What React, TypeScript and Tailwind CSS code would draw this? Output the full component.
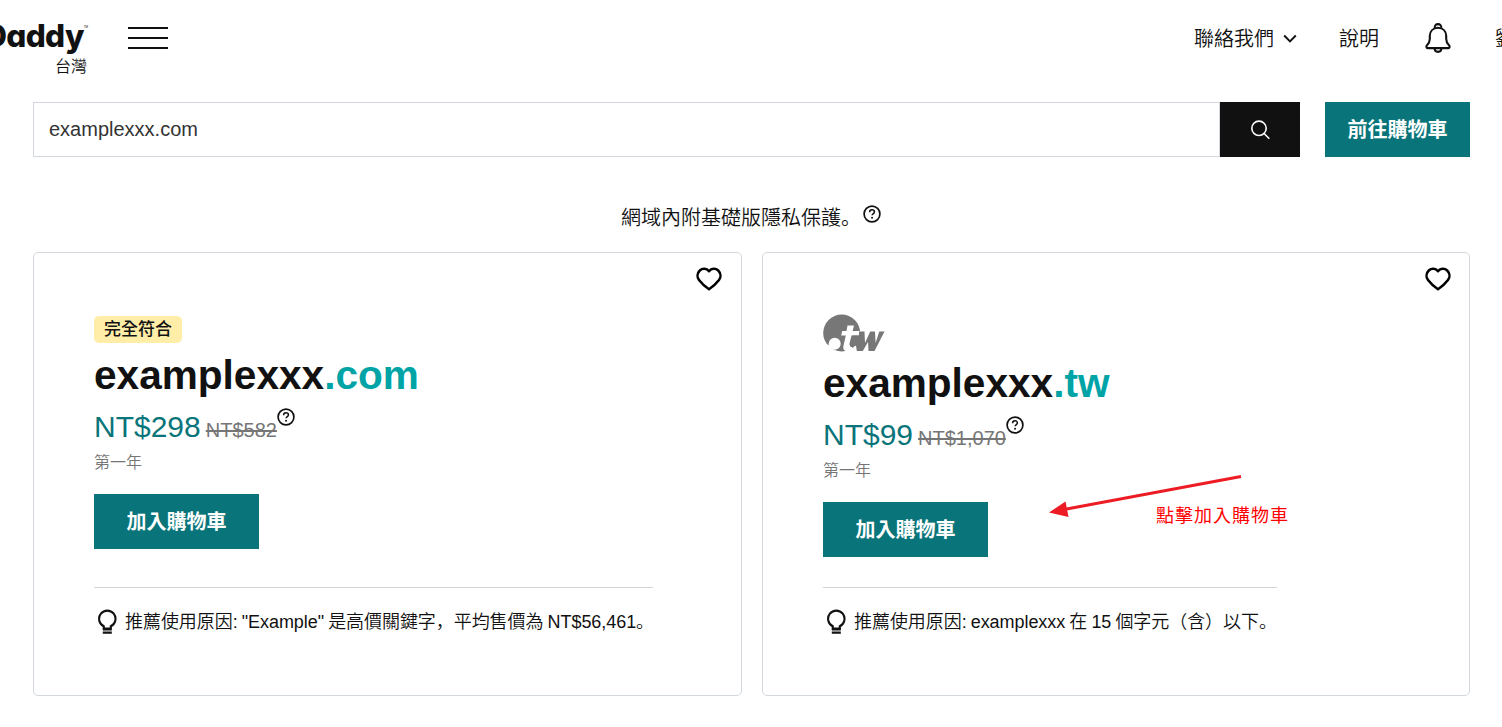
import React from "react";

const QuestionIcon = ({ className = "" }: { className?: string }) => (
  <svg className={className} width="18" height="18" viewBox="0 0 18 18" fill="none" stroke="#111" strokeWidth="1.7">
    <circle cx="9" cy="9" r="7.9" />
    <path d="M6.600 7.200c0-1.500 1-2.400 2.400-2.400s2.400.9 2.400 2.100c0 1.600-2.300 1.700-2.300 3.400" strokeWidth="1.5" />
    <circle cx="9.05" cy="12.7" r="1" fill="#111" stroke="none" />
  </svg>
);

const HeartIcon = () => (
  <svg width="26" height="24" viewBox="0 0 26 24" fill="none" stroke="#000" strokeWidth="2.5" strokeLinejoin="round">
    <path d="M13 4.200C10.600 1.200 6.300 1.100 3.800 3.500 1 6.200 .9 10.300 3 13.100 5.500 16.500 10 20.200 13 22.200 16 20.200 20.500 16.500 23 13.100 25.100 10.300 25 6.200 22.200 3.500 19.700 1.100 15.400 1.200 13 4.200Z" />
  </svg>
);

const BulbIcon = () => (
  <svg width="20" height="26" viewBox="0 0 20 26" fill="none" stroke="#111" strokeWidth="2.1">
    <path d="M6.800 17.200A8.200 8.200 0 1 1 13.800 17.200V19.500H6.800Z" />
    <path d="M5.800 20.300h9M5.800 23.700h9" strokeWidth="2.300" />
  </svg>
);

const BellIcon = () => (
  <svg width="26" height="32" viewBox="0 0 26 32" fill="none" stroke="#111" strokeWidth="2.1" strokeLinejoin="round">
    <path d="M13 4.800C8 4.800 5 8.300 4.800 12.800v3.300c0 3.300-1.200 4.600-2.800 6.200-1 1-.9 2.800.8 2.800h20.400c1.700 0 1.800-1.800.8-2.800-1.600-1.600-2.800-2.900-2.800-6.200v-3.300C21 8.300 18 4.800 13 4.800Z" />
    <path d="M9.800 4.900C9.400 2.500 11 1.100 13 1.100s3.600 1.400 3.200 3.800M9.600 25.300c0 2.200 1.400 3.600 3.400 3.600s3.400-1.400 3.400-3.600" />
  </svg>
);

const TwLogo = () => (
  <svg width="62" height="38" viewBox="0 0 62 38">
    <circle cx="18.700" cy="19" r="18.500" fill="#777" />
    <circle cx="11.700" cy="29.800" r="6" fill="#fff" />
    <path d="M4.500 30 12 37.500H5Z" fill="#fff" />
    <path d="M24.500 11.500H31L29.600 17H38v4.500h-9.500l-2 8c-.4 1.900.8 2.600 3.100 2.200l-1 4.800c-5 1.500-9.200.3-8.200-4.600l2.400-10.400h-4.600l1-4.500h4.300Z" fill="#fff" />
    <path d="M29.600 21.500H36V17.500h5.500L42 29l5.200-11.500h4.800L52.600 29l3.700-11.500H61.500L51.500 37h-6L45 28l-5.200 9h-6L33 31.500l-3.200 1.500c-2.200.4-3.100-.6-2.700-2.300Z" fill="#777" />
  </svg>
);

type CardProps = {
  mark: React.ReactNode;
  tld: string;
  price: string;
  oldPrice: string;
  reason: React.ReactNode;
  titleGap: string;
  rule: string;
};

const Punct = ({ children }: { children: string }) => (
  <span lang="zh-CN" className="font-['Noto_Sans_CJK_SC',sans-serif]">{children}</span>
);

function DomainCard({ mark, tld, price, oldPrice, reason, titleGap, rule }: CardProps) {
  return (
    <article className="relative h-[444px] rounded-[5px] border border-[#d3d8de] pl-[60px]">
      <button className="absolute left-[662px] top-[14px]" aria-label="收藏"><HeartIcon /></button>
      {mark}
      <h2 className={`text-[40.6px] leading-[48px] font-bold text-[#111] ${titleGap}`}>
        examplexxx<span className="text-[#00a4a6]">{tld}</span>
      </h2>
      <div className="mt-[10px] flex h-[37px] items-start">
        <span className="text-[30px] leading-9 text-[#09757a]">{price}</span>
        <span className="ml-[5px] mt-[7px] text-[20px] leading-7 text-[#767676] line-through decoration-2">{oldPrice}</span>
        <QuestionIcon className="ml-[0.5px] -mt-[1.500px]" />
      </div>
      <p className="mt-[5px] text-[16px] leading-6 font-[350] text-[#767676]">第一年</p>
      <button className="mt-[19px] flex h-[55px] w-[165px] items-center justify-center bg-[#09757a] text-[20px] font-bold text-white">加入購物車</button>
      <div className={`border-t border-[#d4d4d4] ${rule}`}>
        <div className="flex items-center pt-5">
          <span className="ml-[3px] mr-[8px]"><BulbIcon /></span>
          <span className="pb-[2px] text-[18px] leading-6 font-[350] tracking-[-0.06px] [word-spacing:-0.8px] whitespace-nowrap text-[#111]">{reason}</span>
        </div>
      </div>
    </article>
  );
}

export default function App() {
  return (
    <div className="h-[727px] w-[1502px] overflow-hidden bg-white font-['Liberation_Sans','Noto_Sans_CJK_TC',sans-serif] text-[#111]">
      <header className="flex h-[102px] items-start">
        <div className="flex w-[88px] shrink-0 flex-col items-end">
          <div className="mt-[17px] flex h-[40px] items-start">
            <span className="font-['Inter',sans-serif] text-[31.5px] leading-[38px] font-extrabold tracking-[-0.7px] [font-feature-settings:'cv11']">Daddy</span>
            <span className="mt-[8px] text-[3px] leading-[4px]">TM</span>
          </div>
          <span className="mr-px text-[16px] leading-[19px] font-[350]">台灣</span>
        </div>
        <button className="ml-10 mt-[27px] flex w-10 shrink-0 flex-col gap-2" aria-label="選單">
          <span className="h-0.5 w-full bg-[#111]" />
          <span className="h-0.5 w-full bg-[#111]" />
          <span className="h-0.5 w-full bg-[#111]" />
        </button>
        <nav className="ml-[1026px] flex h-[77px] shrink-0 items-center text-[20px] font-[350] whitespace-nowrap">
          <span>聯絡我們</span>
          <svg className="ml-[9px]" width="14" height="10" viewBox="0 0 14 10" fill="none" stroke="#111" strokeWidth="1.900"><path d="m1.200 1.500 5.800 6 5.800-6" /></svg>
          <span className="ml-[42px]">說明</span>
          <span className="ml-[46px]"><BellIcon /></span>
          <span className="ml-[44px]">劉</span>
        </nav>
      </header>

      <div className="flex h-[55px] pl-[33px]">
        <div className="flex w-[1187px] items-center border border-[#d3d8de] pb-[2px] pl-[15px] text-[20px] text-[#333]">examplexxx.com</div>
        <button className="flex w-20 items-center justify-center bg-[#111]" aria-label="搜尋">
          <svg width="20" height="20" viewBox="0 0 20 20" fill="none" stroke="#fff" strokeWidth="1.600">
            <circle cx="9" cy="8.300" r="7.200" />
            <path d="m13.800 13.300 5.500 5.500" />
          </svg>
        </button>
        <button className="ml-[25px] w-[145px] bg-[#09757a] text-[20px] font-bold text-white">前往購物車</button>
      </div>

      <div className="flex h-[95px] pl-[621px] pt-[45px]">
        <span className="text-[20px] leading-[30px] font-[350] whitespace-nowrap">網域內附基礎版隱私保護<Punct>。</Punct></span>
        <QuestionIcon className="ml-[2px] mt-[3px]" />
      </div>

      <main className="relative grid grid-cols-[709px_708px] gap-5 pl-[33px]">
        <DomainCard
          mark={<div className="mt-[63px] flex h-[27px] w-[88px] items-center justify-center rounded-[5px] bg-[#ffeda8] text-[17px] font-medium">完全符合</div>}
          tld=".com"
          price="NT$298"
          oldPrice="NT$582"
          reason={<>推薦使用原因: "Example" 是高價關鍵字<Punct>，</Punct>平均售價為 NT$56,461<Punct>。</Punct></>}
          titleGap="mt-[8px]"
          rule="mt-[38px] w-[559px]"
        />
        <DomainCard
          mark={<div className="mt-[61px] h-[38px]"><TwLogo /></div>}
          tld=".tw"
          price="NT$99"
          oldPrice="NT$1,070"
          reason={<>推薦使用原因: examplexxx 在 15 個字元（含）以下<Punct>。</Punct></>}
          titleGap="mt-[7px]"
          rule="mt-[30px] w-[454px]"
        />
        <svg className="absolute left-[1048px] top-[220px]" width="196" height="48" viewBox="0 0 196 48">
          <path d="M16 37.500 193 4.500" stroke="#ed1c24" strokeWidth="3" />
          <path d="M1 40.500 17.500 29.500 20.500 45Z" fill="#ed1c24" />
        </svg>
        <span className="absolute left-[1156px] top-[252px] text-[18px] leading-6 font-normal tracking-[1px] text-[#f00]">點擊加入購物車</span>
      </main>
    </div>
  );
}
